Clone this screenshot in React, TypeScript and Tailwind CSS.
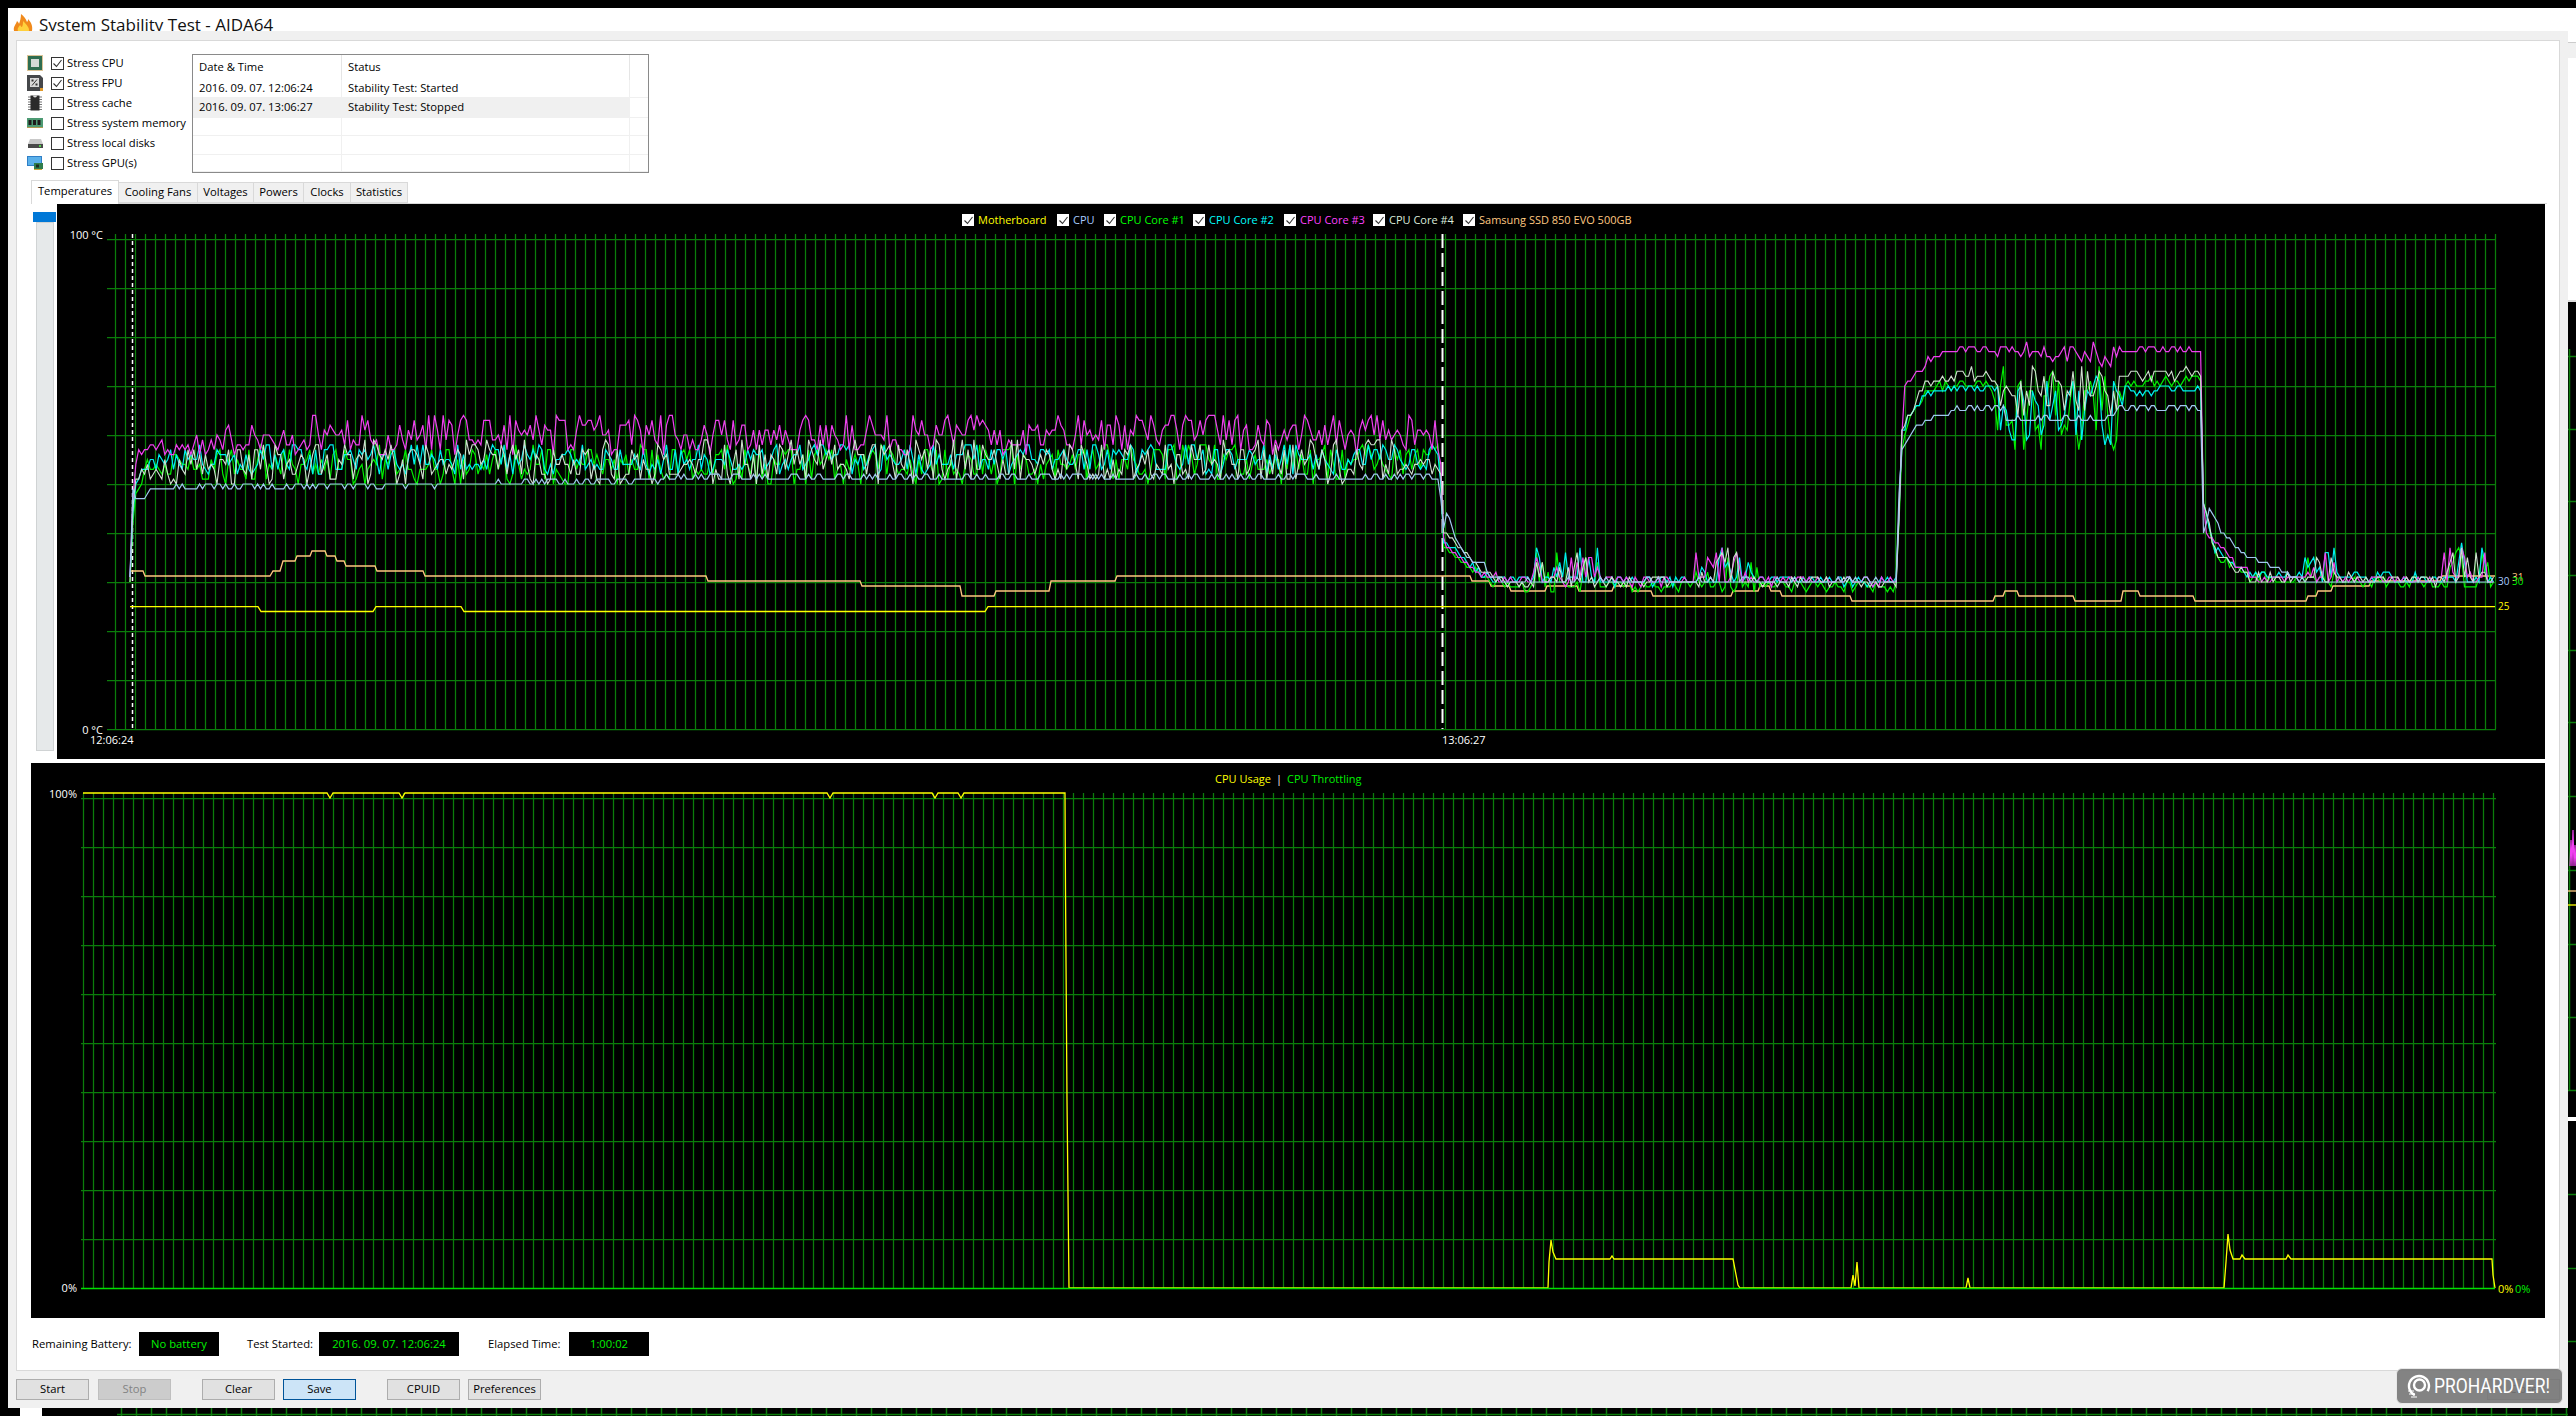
import { ReactNode } from 'react';

type Key = [number, number, number?];

const rng = (seed: number) => () => {
  seed = (seed + 0x6d2b79f5) | 0;
  let t = Math.imul(seed ^ (seed >>> 15), 1 | seed);
  t = (t + Math.imul(t ^ (t >>> 7), 61 | t)) ^ t;
  return ((t ^ (t >>> 14)) >>> 0) / 4294967296;
};

const range = (from: number, to: number, step: number) => {
  const out: number[] = [];
  for (let v = from; v <= to; v += step) out.push(v);
  return out;
};

const lerp = (keys: Key[], x: number) => {
  for (let i = 1; i < keys.length; i++) {
    if (x <= keys[i][0]) {
      const [x0, y0, a0 = 0] = keys[i - 1];
      const [x1, y1, a1 = 0] = keys[i];
      const f = (x - x0) / (x1 - x0);
      return [y0 + (y1 - y0) * f, a0 + (a1 - a0) * f];
    }
  }
  const last = keys[keys.length - 1];
  return [last[1], last[2] ?? 0];
};

const bursts: [number, number][] = [
  [1530, 1600],
  [1695, 1760],
  [2304, 2336],
  [2442, 2493],
];

function trace(seed: number, keys: Key[], withBursts = true) {
  const r = rng(seed);
  return range(keys[0][0], 2495, 2.9)
    .map((x) => {
      const [base, amp] = lerp(keys, x);
      let y = base + (r() * 2 - 1) * amp;
      if (withBursts && bursts.some(([a, b]) => x > a && x < b) && r() > 0.55) y -= r() * 36;
      const snapped = 729 - 4.9 * Math.round((729 - y) / 4.9);
      return `${x.toFixed(1)},${snapped.toFixed(1)}`;
    })
    .join(' ');
}

const magenta = trace(3, [[130, 578], [134, 470], [140, 452, 8], [300, 434, 20], [1440, 434, 20], [1443, 540, 2], [1470, 568, 4], [1500, 580, 5], [1897, 580, 5], [1900, 480], [1904, 388, 2], [1930, 358, 3], [1960, 350, 3], [2000, 350, 6], [2115, 356, 14], [2125, 350, 4], [2201, 350, 4], [2203, 500], [2207, 535, 2], [2240, 568, 4], [2262, 581, 4], [2495, 580, 4]]);
const green = trace(11, [[130, 580], [134, 500], [145, 468, 10], [200, 466, 20], [1440, 464, 20], [1443, 545], [1480, 575, 4], [1500, 586, 6], [1897, 586, 6], [1902, 440, 6], [1925, 392, 6], [1960, 382, 5], [1990, 385, 4], [2000, 410, 42], [2115, 410, 42], [2125, 384, 4], [2201, 378, 6], [2203, 500], [2215, 555, 4], [2250, 578, 5], [2495, 584, 6]]);
const cyan = trace(21, [[130, 576], [134, 490], [145, 462, 8], [200, 460, 16], [1440, 458, 16], [1443, 540], [1480, 572, 4], [1500, 580, 5], [1897, 580, 5], [1902, 430, 6], [1925, 395, 5], [1960, 386, 4], [1990, 388, 4], [2000, 410, 34], [2115, 410, 34], [2125, 390, 5], [2201, 388, 5], [2203, 500], [2215, 550, 4], [2250, 575, 4], [2495, 580, 5]]);
const pale = trace(37, [[130, 582], [134, 480], [145, 472, 10], [200, 464, 22], [1440, 460, 22], [1443, 530], [1480, 568, 4], [1500, 582, 4], [1897, 582, 4], [1902, 430, 6], [1925, 385, 5], [1960, 374, 6], [1990, 374, 5], [2000, 392, 24], [2115, 392, 24], [2125, 376, 5], [2201, 372, 6], [2203, 500], [2215, 552, 4], [2250, 578, 5], [2495, 581, 5]]);
const cpu = trace(53, [[130, 575], [133, 485], [136, 501], [146, 497], [150, 487, 3], [500, 484, 3], [700, 478, 3], [1440, 477, 3], [1442, 533], [1448, 510], [1455, 540, 1], [1470, 560, 1], [1484, 564, 1], [1490, 575, 1], [1505, 581, 2], [1897, 581, 2], [1900, 452], [1905, 443], [1915, 428, 1], [1930, 418, 1], [1950, 413, 1], [1955, 408], [2004, 408, 2], [2006, 418], [2115, 418, 2], [2117, 408], [2201, 408, 2], [2203, 533], [2210, 508], [2220, 530], [2230, 540], [2240, 551], [2250, 557], [2275, 567], [2285, 572], [2305, 582, 2], [2495, 582, 2]], false);

const ssd = '130,571 143,571 145,576 270,576 273,571 280,571 283,561 295,561 297,556 310,556 312,551 325,551 327,556 335,556 337,561 344,561 346,566 375,566 377,571 423,571 425,576 706,576 708,581 860,581 862,586 960,586 962,596 994,596 996,591 1049,591 1051,581 1115,581 1117,576 1470,576 1472,581 1489,581 1491,586 1509,586 1511,591 1545,591 1547,586 1577,586 1579,591 1612,591 1614,586 1631,586 1633,591 1651,591 1653,596 1731,596 1733,591 1758,591 1760,586 1769,586 1771,591 1780,591 1782,596 1850,596 1852,601 1993,601 1995,596 2003,596 2005,591 2017,591 2019,596 2073,596 2075,601 2121,601 2123,591 2138,591 2140,596 2193,596 2195,601 2306,601 2308,596 2316,596 2318,591 2331,591 2333,586 2369,586 2371,581 2440,581 2442,576 2495,576';
const board = '130,606.7 258,606.7 261,611.5 373,611.5 376,606.7 461,606.7 464,611.5 985,611.5 988,606.7 2495,606.7';

const dip = (x: number) => `${x - 3},793 ${x},798 ${x + 3},793`;
const usage = `83,793 ${[330, 402, 830, 935, 961].map(dip).join(' ')} 1065,793 1065.5,890 1067,1100 1069,1288 1548,1288 1549,1262 1551,1240 1553,1252 1556,1259 1610,1259 1612,1256 1614,1259 1733,1259 1738,1285 1740,1288 1851,1288 1853,1275 1855,1286 1857,1262 1859,1288 1966,1288 1968,1278 1970,1288 2224,1288 2226,1262 2228,1234 2230,1250 2233,1259 2240,1259 2242,1255 2245,1259 2286,1259 2288,1255 2291,1259 2492,1259 2493,1275 2495,1288`;

const gridV1 = range(115, 2495, 10);
const gridH1 = range(239, 729, 49);
const gridV2 = range(83, 2493, 10);
const gridH2 = range(798, 1239, 49);
const stubs = range(121, 2566, 15);

const line = '#0b7d0b';
const lineW = '1.25';

function TempGraph() {
  return (
    <svg className="absolute inset-0" width="2488" height="555" viewBox="57 204 2488 555">
      {gridV1.map((x) => (
        <line key={x} x1={x + 0.5} x2={x + 0.5} y1="234" y2="729" stroke={line} strokeWidth={lineW} />
      ))}
      {gridH1.map((y) => (
        <line key={y} x1="107" x2="2496" y1={y + 0.5} y2={y + 0.5} stroke={line} strokeWidth={lineW} />
      ))}
      <line x1="132.5" x2="132.5" y1="234" y2="729" stroke="#fff" strokeWidth="1.5" strokeDasharray="4 3" />
      <line x1="1442.5" x2="1442.5" y1="234" y2="729" stroke="#fff" strokeWidth="2" strokeDasharray="14 5" />
      <polyline points={board} fill="none" stroke="#ffff00" strokeWidth="1.3" />
      <polyline points={ssd} fill="none" stroke="#ffc880" strokeWidth="1.3" />
      <polyline points={green} fill="none" stroke="#00f000" strokeWidth="1.2" />
      <polyline points={cyan} fill="none" stroke="#00f0f0" strokeWidth="1.2" />
      <polyline points={magenta} fill="none" stroke="#f040f0" strokeWidth="1.2" />
      <polyline points={pale} fill="none" stroke="#d0e0d0" strokeWidth="1.1" />
      <polyline points={cpu} fill="none" stroke="#a0c8f0" strokeWidth="1.2" />
    </svg>
  );
}

function UsageGraph() {
  return (
    <svg className="absolute inset-0" width="2514" height="555" viewBox="31 763 2514 555">
      {gridV2.map((x) => (
        <line key={x} x1={x + 0.5} x2={x + 0.5} y1="793" y2="1288" stroke={line} strokeWidth={lineW} />
      ))}
      {gridH2.map((y) => (
        <line key={y} x1="81" x2="2496" y1={y + 0.5} y2={y + 0.5} stroke={line} strokeWidth={lineW} />
      ))}
      <polyline points={usage} fill="none" stroke="#ffff00" strokeWidth="1.3" />
      <line x1="81" x2="2495" y1="1288.5" y2="1288.5" stroke="#00e000" strokeWidth="1.5" />
    </svg>
  );
}

function CpuIcon() {
  return (
    <svg width="16" height="16" viewBox="0 0 16 16">
      <rect x="0.5" y="0.5" width="15" height="15" fill="none" stroke="#b8892e" strokeDasharray="1 1" />
      <rect x="1" y="1" width="14" height="14" fill="#2f6d50" />
      <rect x="4" y="4" width="8" height="8" fill="#d3dad6" />
    </svg>
  );
}

function FpuIcon() {
  return (
    <svg width="16" height="16" viewBox="0 0 16 16">
      <path d="M0 0h13l3 3v13H0z" fill="#45474a" />
      <rect x="3" y="3" width="9" height="9" fill="#d9d9d9" />
      <path d="M5 10.5l5-6" stroke="#333" strokeWidth="1" />
      <rect x="4.5" y="4.5" width="2" height="2" fill="#333" />
      <rect x="8.5" y="8.5" width="2" height="2" fill="#333" />
      <rect x="13" y="13" width="3" height="3" fill="#e09a2c" />
    </svg>
  );
}

function CacheIcon() {
  return (
    <svg width="14" height="16" viewBox="0 0 14 16">
      <path d="M0 2h14M0 4.5h14M0 7h14M0 9.5h14M0 12h14M0 14.5h14" stroke="#777" strokeWidth="1" />
      <rect x="2.5" y="0.5" width="9" height="15" fill="#2b2b2b" />
      <path d="M5 0.5a2 2 0 0 0 4 0z" fill="#ddd" />
    </svg>
  );
}

function RamIcon() {
  return (
    <svg width="16" height="10" viewBox="0 0 16 10">
      <rect width="16" height="9" fill="#4d9a73" />
      <rect x="1.5" y="2" width="3" height="5" fill="#1c1c1c" />
      <rect x="6" y="2" width="3" height="5" fill="#1c1c1c" />
      <rect x="10.5" y="2" width="3" height="5" fill="#1c1c1c" />
      <rect y="9" width="16" height="1" fill="#b09a50" />
    </svg>
  );
}

function DiskIcon() {
  return (
    <svg width="15" height="9" viewBox="0 0 15 9">
      <path d="M2 0h11l2 5v4H0V5z" fill="#c9c9c9" />
      <rect y="5" width="15" height="4" fill="#4a4a4a" />
      <rect x="11" y="6" width="2" height="2" fill="#54d24c" />
    </svg>
  );
}

function GpuIcon() {
  return (
    <svg width="16" height="14" viewBox="0 0 16 14">
      <rect width="15" height="10" fill="#2f7fc6" />
      <rect x="1" y="1" width="13" height="8" fill="#5ab0ea" />
      <rect x="7" y="7" width="9" height="6" fill="#2f7d4d" />
      <rect x="9" y="8.5" width="3" height="3" fill="#1c2c20" />
      <rect x="7" y="13" width="8" height="1" fill="#c9a63c" />
    </svg>
  );
}

function Flame() {
  return (
    <svg width="20" height="17" viewBox="0 0 20 17">
      <path d="M1 17c-1-5 2-6 3-10 1 1 2 2 2 3 1-3 2-6 2-10 3 2 5 5 6 8 1-1 1-2 1-3 3 3 5 7 4 12z" fill="#f08a1c" />
      <path d="M5 17c-1-3 1-4 2-6 1 1 1 2 2 2 1-2 1-4 1-6 2 2 4 4 5 6 1 1 1 3 1 4z" fill="#ffd03c" />
    </svg>
  );
}

function Check({ on, size = 'm' }: { on: boolean; size?: 'm' | 's' }) {
  return (
    <span
      className={
        size === 'm'
          ? 'flex h-[13px] w-[13px] items-center justify-center border border-[#333] bg-white'
          : 'flex h-[12px] w-[12px] items-center justify-center bg-white'
      }
    >
      {on && (
        <svg width="11" height="11" viewBox="0 0 11 11">
          <path d="M1.5 5.5l3 3 5-6.5" fill="none" stroke="#333" strokeWidth="1.1" />
        </svg>
      )}
    </span>
  );
}

const stress: { icon: ReactNode; label: string; on: boolean }[] = [
  { icon: <CpuIcon />, label: 'Stress CPU', on: true },
  { icon: <FpuIcon />, label: 'Stress FPU', on: true },
  { icon: <CacheIcon />, label: 'Stress cache', on: false },
  { icon: <RamIcon />, label: 'Stress system memory', on: false },
  { icon: <DiskIcon />, label: 'Stress local disks', on: false },
  { icon: <GpuIcon />, label: 'Stress GPU(s)', on: false },
];

const legend = [
  { label: 'Motherboard', color: 'text-[#ffff00]', w: 'w-[95px]' },
  { label: 'CPU', color: 'text-[#a8ccff]', w: 'w-[47px]' },
  { label: 'CPU Core #1', color: 'text-[#00ff00]', w: 'w-[89px]' },
  { label: 'CPU Core #2', color: 'text-[#00ffff]', w: 'w-[91px]' },
  { label: 'CPU Core #3', color: 'text-[#ff40ff]', w: 'w-[89px]' },
  { label: 'CPU Core #4', color: 'text-[#dcecdc]', w: 'w-[90px]' },
  { label: 'Samsung SSD 850 EVO 500GB', color: 'text-[#ffc880]', w: 'w-[170px]' },
];

const tabs = [
  { label: 'Cooling Fans', w: 'w-[79px]' },
  { label: 'Voltages', w: 'w-[56px]' },
  { label: 'Powers', w: 'w-[50px]' },
  { label: 'Clocks', w: 'w-[47px]' },
  { label: 'Statistics', w: 'w-[57px]' },
];

function LogRow({ h, date, status, hot }: { h: string; date?: string; status?: string; hot?: boolean }) {
  return (
    <div className={`flex items-center border-b border-[#f0f0f0] ${h}`}>
      <div className={`flex h-full w-[149px] items-center border-r border-[#f0f0f0] pl-[6px] ${hot ? 'bg-[#f0f0f0]' : ''}`}>{date}</div>
      <div className={`flex h-full w-[288px] items-center border-r border-[#f0f0f0] pl-[6px] ${hot ? 'bg-[#f0f0f0]' : ''}`}>{status}</div>
    </div>
  );
}

function Btn({ children, tone = 'plain' }: { children: ReactNode; tone?: 'plain' | 'off' | 'focus' }) {
  const look = {
    plain: 'border-[#adadad] bg-[#e1e1e1] text-black',
    off: 'border-[#bfbfbf] bg-[#cccccc] text-[#838383]',
    focus: 'border-[#005499] bg-[#cce4f7] text-black',
  }[tone];
  return <div className={`flex h-[21px] w-[73px] items-center justify-center border ${look}`}>{children}</div>;
}

function Readout({ children, w }: { children: ReactNode; w: string }) {
  return <div className={`flex h-6 items-center justify-center bg-black text-[#00f000] ${w}`}>{children}</div>;
}

export default function App() {
  return (
    <div className="relative flex h-[1416px] w-[2576px] overflow-hidden bg-black font-['Open_Sans',sans-serif] text-[11.25px] text-black">
      <div className="flex w-[2568px] flex-col">
        <div className="h-2 shrink-0 bg-black" />
        <div className="ml-2 flex h-[1400px] w-[2560px] shrink-0 flex-col bg-[#f0f0f0]">
          <div className="flex h-[23px] shrink-0 items-start overflow-hidden bg-white pl-[5px] pt-[6px]">
            <Flame />
            <span className="ml-[6px] -mt-[2px] whitespace-nowrap text-[17px] leading-[26px] text-[#111]">System Stability Test - AIDA64</span>
          </div>

          <div className="mx-2 mt-[9px] flex h-[1331px] shrink-0 flex-col border border-[#d9d9d9] bg-white pl-[10px] pr-[12px]">
            <div className="flex h-[139px] shrink-0 pt-3">
              <div className="flex w-[165px] flex-col">
                {stress.map((s) => (
                  <div key={s.label} className="flex h-5 items-center">
                    <div className="flex w-4 justify-center">{s.icon}</div>
                    <div className="ml-2">
                      <Check on={s.on} />
                    </div>
                    <span className="ml-[3px] whitespace-nowrap">{s.label}</span>
                  </div>
                ))}
              </div>
              <div className="mt-px h-[119px] w-[457px] border border-[#8a8a8a]">
                <div className="flex h-[25px] items-center">
                  <div className="flex h-full w-[149px] items-center border-r border-[#e5e5e5] pl-[6px]">Date &amp; Time</div>
                  <div className="flex h-full w-[288px] items-center border-r border-[#e5e5e5] pl-[6px]">Status</div>
                </div>
                <LogRow h="h-[18px]" date="2016. 09. 07. 12:06:24" status="Stability Test: Started" />
                <LogRow h="h-[20px]" date="2016. 09. 07. 13:06:27" status="Stability Test: Stopped" hot />
                <LogRow h="h-[18px]" />
                <LogRow h="h-[19px]" />
                <LogRow h="h-[17px]" />
              </div>
            </div>

            <div className="ml-1 flex h-[24px] shrink-0 items-start border-b border-[#d9d9d9]">
              <div className="z-10 flex h-[24px] w-[88px] items-center justify-center border border-b-0 border-[#d9d9d9] bg-white pb-[2px]">Temperatures</div>
              {tabs.map((t) => (
                <div key={t.label} className={`mt-[2px] flex h-[21px] items-center justify-center border border-l-0 border-[#d9d9d9] bg-[#f0f0f0] ${t.w}`}>
                  {t.label}
                </div>
              ))}
            </div>

            <div className="ml-1 flex h-[555px] shrink-0">
              <div className="w-[26px] pl-[2px] pt-2">
                <div className="h-[10px] w-[23px] bg-[#0078d7]" />
                <div className="ml-[3px] h-[529px] w-[18px] border border-[#d0d3d4] bg-[#e6e9ea]" />
              </div>
              <div className="relative h-[555px] w-[2488px] bg-black text-white">
                <TempGraph />
                <div className="absolute left-[905px] top-[8px] flex items-center text-[11px]">
                  {legend.map((l) => (
                    <div key={l.label} className={`flex shrink-0 items-center gap-[4px] whitespace-nowrap ${l.w} ${l.color}`}>
                      <Check on size="s" />
                      {l.label}
                    </div>
                  ))}
                </div>
                <span className="absolute right-[2442px] top-[23px] whitespace-nowrap text-[11px]">100 °C</span>
                <span className="absolute right-[2442px] top-[518px] whitespace-nowrap text-[11px]">0 °C</span>
                <span className="absolute left-[33px] top-[528px] text-[11px]">12:06:24</span>
                <span className="absolute left-[1385px] top-[528px] text-[11px]">13:06:27</span>
                <span className="absolute left-[2455px] top-[366px] text-[10px] text-[#ffc880]">31</span>
                <span className="absolute left-[2441px] top-[370px] text-[10px] text-[#a8ccff]">30</span>
                <span className="absolute left-[2455px] top-[370px] text-[10px] text-[#00f000]">30</span>
                <span className="absolute left-[2441px] top-[395px] text-[10px] text-[#ffff00]">25</span>
              </div>
            </div>

            <div className="ml-1 mt-1 relative h-[555px] w-[2514px] shrink-0 bg-black text-white">
              <UsageGraph />
              <div className="absolute left-[1184px] top-[8px] flex gap-[5px] whitespace-nowrap text-[11px]">
                <span className="text-[#ffff00]">CPU Usage</span>
                <span className="text-white">|</span>
                <span className="text-[#00f000]">CPU Throttling</span>
              </div>
              <span className="absolute right-[2468px] top-[23px] text-[11px]">100%</span>
              <span className="absolute right-[2468px] top-[517px] text-[11px]">0%</span>
              <span className="absolute left-[2467px] top-[518px] text-[11px] text-[#ffff00]">0%</span>
              <span className="absolute left-[2484px] top-[518px] text-[11px] text-[#00f000]">0%</span>
            </div>

            <div className="ml-[5px] flex flex-1 items-center">
              <div className="w-[107px]">Remaining Battery:</div>
              <Readout w="w-20">No battery</Readout>
              <div className="w-[100px] pl-7">Test Started:</div>
              <Readout w="w-[140px]">2016. 09. 07. 12:06:24</Readout>
              <div className="w-[110px] pl-[29px]">Elapsed Time:</div>
              <Readout w="w-20">1:00:02</Readout>
            </div>
          </div>

          <div className="flex items-start pl-2 pr-2 pt-2">
            <Btn>Start</Btn>
            <div className="ml-[9px]">
              <Btn tone="off">Stop</Btn>
            </div>
            <div className="ml-[31px]">
              <Btn>Clear</Btn>
            </div>
            <div className="ml-2">
              <Btn tone="focus">Save</Btn>
            </div>
            <div className="ml-[31px]">
              <Btn>CPUID</Btn>
            </div>
            <div className="ml-2">
              <Btn>Preferences</Btn>
            </div>
            <div className="ml-auto">
              <Btn>Close</Btn>
            </div>
          </div>
        </div>

        <div className="flex h-2 shrink-0">
          <div className="w-5 bg-black" />
          <div className="w-[22px] bg-white" />
          <svg width="2526" height="8" viewBox="42 1408 2526 8">
            {stubs.map((x) => (
              <line key={x} x1={x + 0.5} x2={x + 0.5} y1="1408" y2="1416" stroke={line} strokeWidth="1.5" />
            ))}
            <line x1="117" x2="2568" y1="1414.5" y2="1414.5" stroke={line} strokeWidth="1.5" />
          </svg>
        </div>
      </div>

      <div className="flex w-2 flex-col">
        <div className="h-2 bg-black" />
        <div className="h-[35px] border-b border-[#cccccc] bg-white" />
        <div className="h-[15px] bg-[#f0f0f0]" />
        <div className="h-[244px] border-b-2 border-[#dddddd] bg-white" />
        <svg width="8" height="815" viewBox="2568 302 8 815" className="shrink-0">
          <line x1="2569.5" x2="2569.5" y1="349" y2="1090" stroke={line} strokeWidth="1.5" />
          {[356, 429, 501, 575, 650, 722, 796, 870, 944, 1017, 1090].map((y) => (
            <line key={y} x1="2568" x2="2576" y1={y + 0.5} y2={y + 0.5} stroke={line} strokeWidth="1.5" />
          ))}
          <polyline points="2570,866 2571,840 2572,866 2573,830 2574,866 2575,845 2576,866" fill="none" stroke="#f040f0" strokeWidth="1.2" />
          <line x1="2568" x2="2576" y1="891" y2="891" stroke="#ffc880" strokeWidth="1.3" />
          <line x1="2568" x2="2576" y1="905" y2="905" stroke="#ffff00" strokeWidth="1.3" />
        </svg>
        <div className="h-1 shrink-0 bg-white" />
        <svg width="8" height="295" viewBox="2568 1121 8 295" className="shrink-0">
          {[1194, 1268, 1341].map((y) => (
            <line key={y} x1="2568" x2="2576" y1={y + 0.5} y2={y + 0.5} stroke={line} strokeWidth="1.5" />
          ))}
        </svg>
      </div>

      <div className="absolute left-[2396px] top-[1368px] flex h-[36px] w-[167px] items-center overflow-hidden rounded-md border border-[#e8e8e8] bg-[#777777]/90 pl-[10px]">
        <svg width="24" height="24" viewBox="0 0 24 24" className="shrink-0">
          <circle cx="12" cy="12" r="10" fill="none" stroke="#fff" strokeWidth="2.4" strokeDasharray="48 15" transform="rotate(115 12 12)" />
          <circle cx="12.5" cy="11" r="5.5" fill="none" stroke="#fff" strokeWidth="2.4" />
          <path d="M1 17h6M2 20h6M4 23h6" stroke="#fff" strokeWidth="1.2" />
        </svg>
        <span className="ml-[3px] origin-left scale-x-[0.83] whitespace-nowrap font-['Roboto',sans-serif] text-[21px] leading-none text-white">PROHARDVER!</span>
      </div>
    </div>
  );
}
